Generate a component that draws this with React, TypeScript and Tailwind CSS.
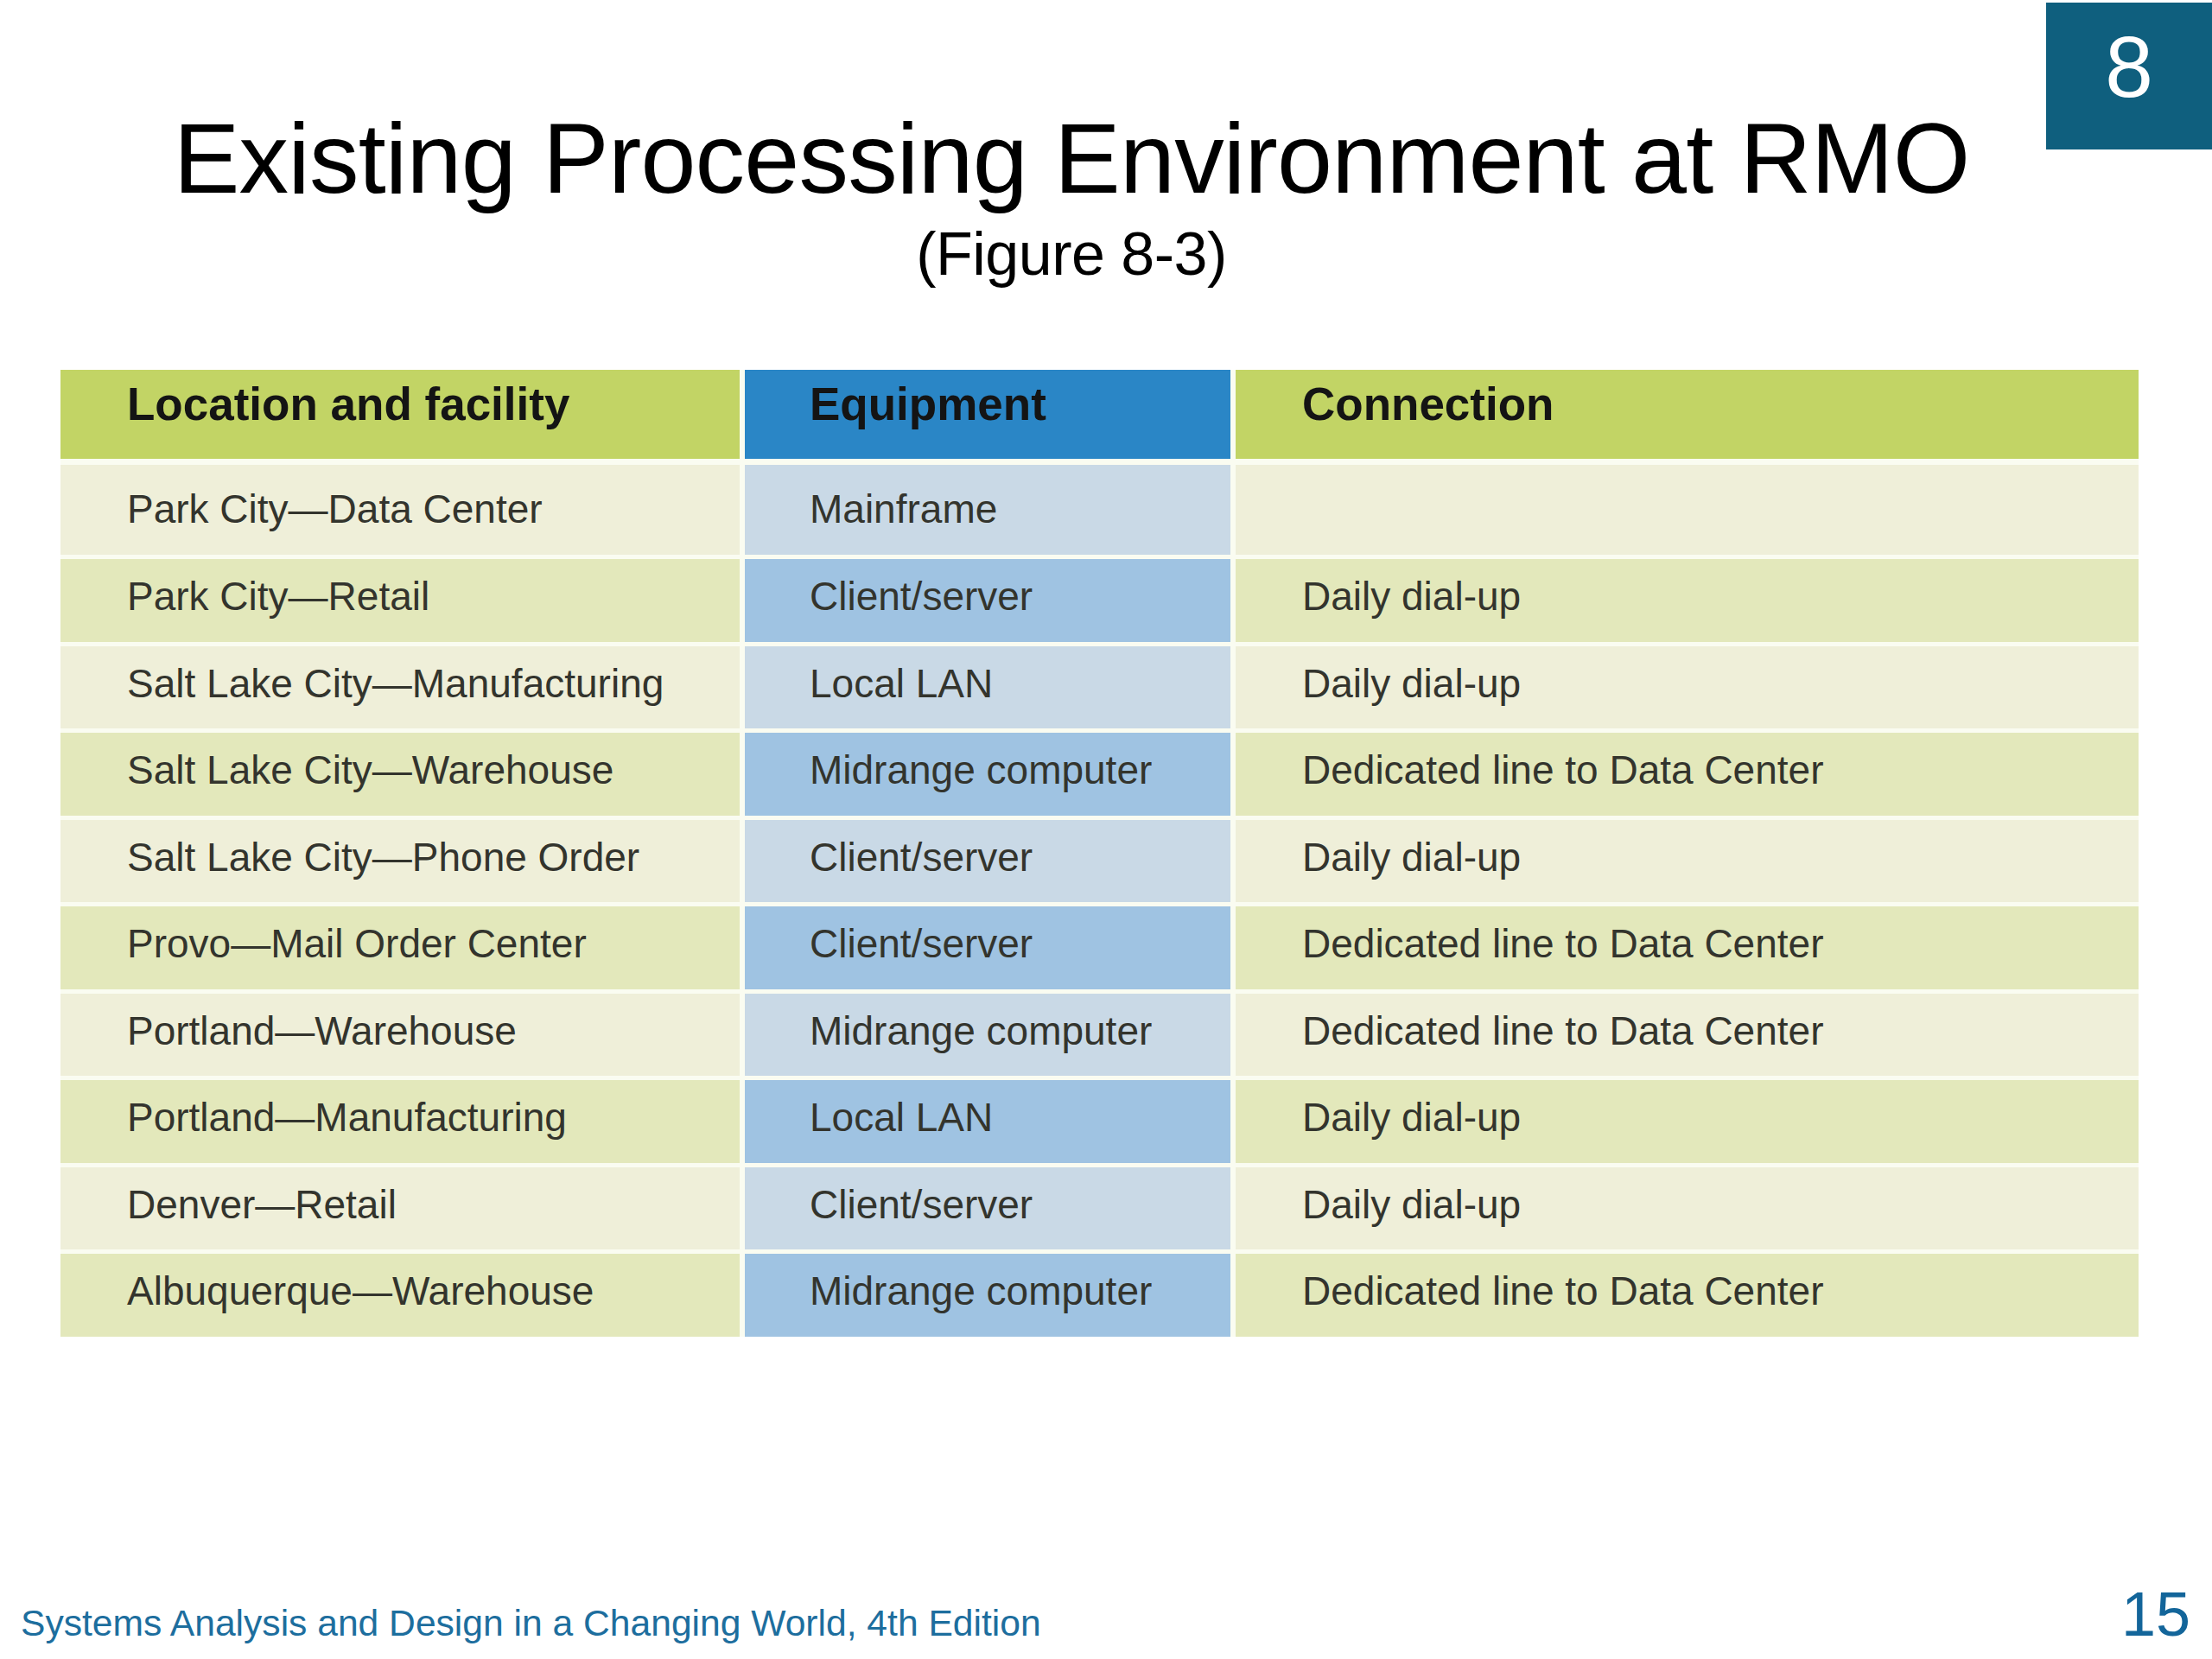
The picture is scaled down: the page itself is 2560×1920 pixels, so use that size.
const rows = [
  ['Park City—Data Center', 'Mainframe', ''],
  ['Park City—Retail', 'Client/server', 'Daily dial-up'],
  ['Salt Lake City—Manufacturing', 'Local LAN', 'Daily dial-up'],
  ['Salt Lake City—Warehouse', 'Midrange computer', 'Dedicated line to Data Center'],
  ['Salt Lake City—Phone Order', 'Client/server', 'Daily dial-up'],
  ['Provo—Mail Order Center', 'Client/server', 'Dedicated line to Data Center'],
  ['Portland—Warehouse', 'Midrange computer', 'Dedicated line to Data Center'],
  ['Portland—Manufacturing', 'Local LAN', 'Daily dial-up'],
  ['Denver—Retail', 'Client/server', 'Daily dial-up'],
  ['Albuquerque—Warehouse', 'Midrange computer', 'Dedicated line to Data Center'],
]

export default function App() {
  return (
    <div className="relative flex h-[1920px] w-[2560px] flex-col overflow-hidden bg-white font-['Liberation_Sans',Arial,sans-serif]">
      {/* chapter badge */}
      <div className="absolute right-0 top-[3px] flex h-[170px] w-[192px] justify-center bg-[#0f5f7e] pt-[24px]">
        <span className="text-[100px] leading-none text-white">8</span>
      </div>

      <header className="flex flex-col items-center pr-[80px] pt-[126px]">
        <h1 className="text-[115px] leading-none tracking-[-0.8px] text-black">Existing Processing Environment at RMO</h1>
        <p className="mt-[18px] text-[70px] leading-none tracking-[-0.5px] text-black">(Figure 8-3)</p>
      </header>

      <div className="ml-[70px] mt-[99px] flex w-[2405px] flex-col gap-[5px] bg-[#fafcf1] text-[#33342d]">
        <div className="flex h-[103px] gap-[6px] text-[53px] font-bold leading-none text-[#141414]">
          <div className="w-[786px] bg-[#c2d465] pl-[77px] pt-[13px]">Location and facility</div>
          <div className="w-[562px] bg-[#2a86c6] pl-[75px] pt-[13px]">Equipment</div>
          <div className="flex-1 bg-[#c2d465] pl-[77px] pt-[13px]">Connection</div>
        </div>
        {rows.map((r, i) => {
          const first = i === 0
          const green = i % 2 === 1 ? 'bg-[#e3e8bb]' : 'bg-[#efefd9]'
          const blue = i % 2 === 1 ? 'bg-[#9fc3e2]' : 'bg-[#c9d9e6]'
          const pad = first ? 'pb-[2px]' : 'pb-[9px]'
          return (
            <div key={i} className={`flex gap-[6px] text-[46px] leading-none ${first ? 'mt-[2px] h-[104px]' : 'h-[95.5px]'}`}>
              <div className={`flex w-[786px] items-center pl-[77px] ${pad} ${green}`}>{r[0]}</div>
              <div className={`flex w-[562px] items-center pl-[75px] ${pad} ${blue}`}>{r[1]}</div>
              <div className={`flex flex-1 items-center pl-[77px] ${pad} ${green}`}>{r[2]}</div>
            </div>
          )
        })}
      </div>

      <footer className="mt-auto flex items-baseline justify-between pb-[16px] pl-[24px] pr-[25px]">
        <span className="text-[42.6px] leading-none text-[#1d6e9e]">Systems Analysis and Design in a Changing World, 4th Edition</span>
        <span className="text-[72px] leading-none text-[#13659a]">15</span>
      </footer>
    </div>
  )
}
